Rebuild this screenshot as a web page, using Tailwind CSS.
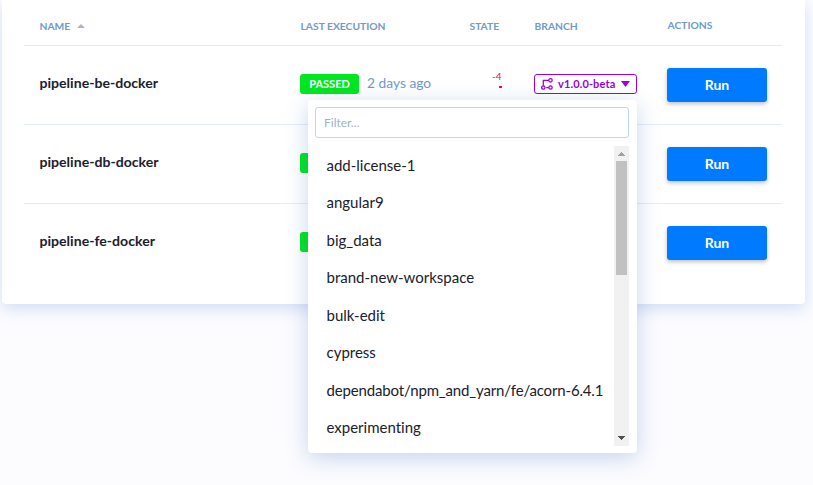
<!DOCTYPE html>
<html lang="en">
<head>
<meta charset="utf-8">
<title>Pipelines</title>
<script src="https://cdn.jsdelivr.net/npm/@tailwindcss/browser@4"></script>
</head>
<body class="h-[485px] w-[813px] overflow-hidden bg-[#fcfcff] font-['Lato',sans-serif] text-[#20202c] [font-variant-ligatures:none]">
<main class="relative ml-[2px] h-[304px] w-[803px] rounded-b-[4px] bg-white px-[22px] shadow-[0_5px_16px_rgba(50,100,200,0.2)]">
  <div class="w-[758px]">
    <div class="grid h-[46px] grid-cols-[276px_170px_64px_133px_115px] items-start border-b border-[#e2ecf9] pt-[20px] text-[10.3px] leading-[13px] font-bold text-[#7199cc]">
      <div class="flex items-center pl-[15.5px]">NAME
        <svg class="mb-px ml-[7px] h-[4px] w-[8px]" viewBox="0 0 8 4" fill="#a9b6cd"><path d="M4 0 8 4H0z"/></svg>
      </div>
      <div class="pl-[0.5px]">LAST EXECUTION</div>
      <div class="-ml-[0.5px]">STATE</div>
      <div class="pl-[0.5px]">BRANCH</div>
      <div class="-mt-px pl-[0.5px]">ACTIONS</div>
    </div>

    <div class="grid h-[79px] grid-cols-[276px_170px_64px_133px_115px] border-b border-[#e2ecf9]">
      <div class="pt-[27px] pl-[15.5px] text-[14.1px] leading-[20px] font-bold">pipeline-be-docker</div>
      <div class="mt-[28px] flex h-[20px] items-center">
        <span class="h-[20px] w-[59px] rounded-[3px] bg-[#00e622] text-center text-[11px] leading-[20px] font-bold text-white">PASSED</span>
        <span class="mb-[2px] ml-[8px] text-[13.8px] leading-[18px] text-[#7199cc]">2 days ago</span>
      </div>
      <div class="flex flex-col items-end pt-[24px] pr-[32.5px] text-[10px] leading-[12px] text-[#f5055f]">-4<i class="mt-[4px] h-[2px] w-[3px] bg-[#f5055f]"></i></div>
      <div class="pt-[28px]">
        <div class="flex h-[20px] w-[103px] items-center rounded-[3px] border border-[#9b00e1] pl-[6px] text-[11px] font-bold text-[#9b00e1]">
          <svg class="h-[12px] w-[13px]" viewBox="0 0 13 12" fill="none" stroke="#9b00e1" stroke-width="1.25"><circle cx="2.3" cy="9.5" r="1.7"/><circle cx="9.5" cy="9.5" r="1.7"/><circle cx="9.5" cy="2.3" r="1.7"/><path d="M2.3 7.8V2.3H7.8M5.2 9.5H7.8"/></svg>
          <span class="ml-[4px] w-[58px] tracking-[0.12px]">v1.0.0-beta</span>
          <svg class="ml-[4.5px] h-[6px] w-[9px]" viewBox="0 0 9 6" fill="#9b00e1"><path d="M0 0H9L4.5 6z"/></svg>
        </div>
      </div>
      <div class="pt-[22px]"><button class="block h-[34px] w-[100px] rounded-[3px] bg-[#007bff] pb-[2px] text-[14px] font-bold text-white shadow-[0_2px_4px_rgba(0,0,0,0.25)]">Run</button></div>
    </div>

    <div class="grid h-[79px] grid-cols-[276px_170px_64px_133px_115px] border-b border-[#e2ecf9]">
      <div class="pt-[27px] pl-[15.5px] text-[14.1px] leading-[20px] font-bold">pipeline-db-docker</div>
      <div class="pt-[28px]"><div class="h-[20px] w-[59px] rounded-[3px] bg-[#00e622]"></div></div>
      <div></div><div></div>
      <div class="pt-[22px]"><button class="block h-[34px] w-[100px] rounded-[3px] bg-[#007bff] pb-[2px] text-[14px] font-bold text-white shadow-[0_2px_4px_rgba(0,0,0,0.25)]">Run</button></div>
    </div>

    <div class="grid h-[79px] grid-cols-[276px_170px_64px_133px_115px]">
      <div class="pt-[27px] pl-[15.5px] text-[14.1px] leading-[20px] font-bold">pipeline-fe-docker</div>
      <div class="pt-[28px]"><div class="h-[20px] w-[59px] rounded-[3px] bg-[#00e622]"></div></div>
      <div></div><div></div>
      <div class="pt-[22px]"><button class="block h-[34px] w-[100px] rounded-[3px] bg-[#007bff] pb-[2px] text-[14px] font-bold text-white shadow-[0_2px_4px_rgba(0,0,0,0.25)]">Run</button></div>
    </div>
  </div>

  <!-- Branch picker menu -->
  <div class="absolute top-[100px] left-[306px] h-[353px] w-[329px] rounded-[4px] bg-white px-[7px] pt-[7px] shadow-[0_5px_22px_rgba(40,90,180,0.25)]">
    <input class="block h-[31px] w-[314px] rounded-[3px] border border-[#c0d5f3] px-[8px] text-[12px] placeholder:text-[#a0b1cf]" placeholder="Filter...">
    <div class="mt-[8px] flex h-[300px] w-[314px] justify-between">
      <ul class="pt-[0.5px] pl-[11.5px] text-[15px] leading-[37.5px] whitespace-nowrap">
        <li>add-license-1</li>
        <li>angular9</li>
        <li>big_data</li>
        <li>brand-new-workspace</li>
        <li>bulk-edit</li>
        <li>cypress</li>
        <li class="tracking-[-0.155px]">dependabot/npm_and_yarn/fe/acorn-6.4.1</li>
        <li>experimenting</li>
      </ul>
      <div class="flex w-[15px] flex-col items-center bg-[#f1f1f1]">
        <svg class="mt-[6px] h-[4px] w-[7px]" viewBox="0 0 7 4" fill="#a0a0a0" shape-rendering="crispEdges"><path d="M3 0h1v1h1v1h1v1h1v1H0V3h1V2h1V1h1z"/></svg>
        <div class="mt-[5px] h-[114px] w-[11px] bg-[#c1c1c1]"></div>
        <svg class="mt-auto mb-[6px] h-[4px] w-[7px]" viewBox="0 0 7 4" fill="#505050" shape-rendering="crispEdges"><path d="M0 0h7v1H6v1H5v1H4v1H3V3H2V2H1V1H0z"/></svg>
      </div>
    </div>
  </div>
</main>
</body>
</html>
